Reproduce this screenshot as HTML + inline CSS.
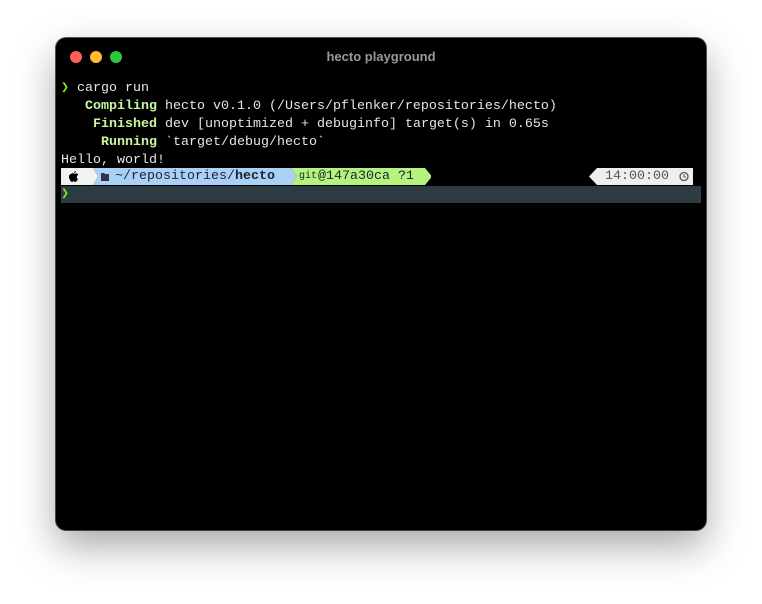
<!DOCTYPE html><html><head><style>
body{margin:0;width:762px;height:604px;background:#fff;position:relative;overflow:hidden}
.win{position:absolute;left:56px;top:38px;width:650px;height:492px;background:#000;border-radius:10px;box-shadow:0 16px 40px rgba(0,0,0,.35),0 0 0 1px #555}
.dot{position:absolute;top:13px;width:12px;height:12px;border-radius:50%}
.title{position:absolute;top:11px;left:0;width:650px;text-align:center;color:#9a9a9a;font:bold 13px "Liberation Sans",sans-serif}
.t{position:absolute;left:5px;font:13.33px/18px "Liberation Mono",monospace;color:#e6e6e6;white-space:pre}
.g{color:#c8f7a0;font-weight:bold}
.seg{position:absolute;height:17px;top:130px;font:13.33px/17px "Liberation Mono",monospace;white-space:pre}
</style></head><body>
<div class="win">
<div class="dot" style="left:14px;background:#fe5f57"></div>
<div class="dot" style="left:34px;background:#febc2e"></div>
<div class="dot" style="left:54px;background:#28c840"></div>
<div class="title">hecto playground</div>
<div class="t" style="top:42px"><span style="color:#7ee02f">❯</span> cargo run</div>
<div class="t" style="top:60px">   <span class="g">Compiling</span> hecto v0.1.0 (/Users/pflenker/repositories/hecto)</div>
<div class="t" style="top:78px">    <span class="g">Finished</span> dev [unoptimized + debuginfo] target(s) in 0.65s</div>
<div class="t" style="top:96px">     <span class="g">Running</span> `target/debug/hecto`</div>
<div class="t" style="top:114px">Hello, world!</div>
<svg style="position:absolute;left:5px;top:130px" width="370" height="17">
<rect x="0" y="0" width="32" height="17" fill="#f2f2f2"/>
<polygon points="32,0 230,0 230,17 32,17 37,8.5" fill="#a9d1f5"/>
<polygon points="30,0 32,0 37,8.5 32,17 30,17" fill="#f2f2f2"/>
<polygon points="230,0 364,0 371,8.5 364,17 230,17 236,8.5" fill="#b4f47e"/>
<polygon points="228,0 230,0 236,8.5 230,17 228,17" fill="#a9d1f5"/>
<path d="M10 6c1-1 3-1 4 0 1-1 3-1 3 1-2 1-1 4 0 4-1 2-2 3-3 3-1-1-2-1-3 0-1 0-3-3-3-5 0-2 1-3 2-3zm3-1c0-1 1-2 2-2 0 1-1 2-2 2z" fill="#000"/>
<path d="M40 5h3l1 1h4v7h-8z" fill="#334"/>
</svg>
<div class="seg" style="left:59px;color:#223">~/repositories/<b>hecto</b></div>
<div class="seg" style="left:243px;color:#223;font-size:10px">git</div>
<div class="seg" style="left:262px;color:#223">@147a30ca ?1</div>
<svg style="position:absolute;left:533px;top:130px" width="104" height="17"><polygon points="8,0 104,0 104,17 8,17 0,8.5" fill="#eeeeee"/><circle cx="95" cy="8.5" r="4" fill="none" stroke="#555" stroke-width="1.3"/><path d="M95 6v3h2" stroke="#555" fill="none"/></svg>
<div class="seg" style="left:549px;color:#555">14:00:00</div>
<div style="position:absolute;left:5px;top:148px;width:640px;height:17px;background:#2d3c42"></div>
<div class="t" style="top:148px;line-height:17px;color:#7ee02f">❯</div>
</div>
</body></html>
